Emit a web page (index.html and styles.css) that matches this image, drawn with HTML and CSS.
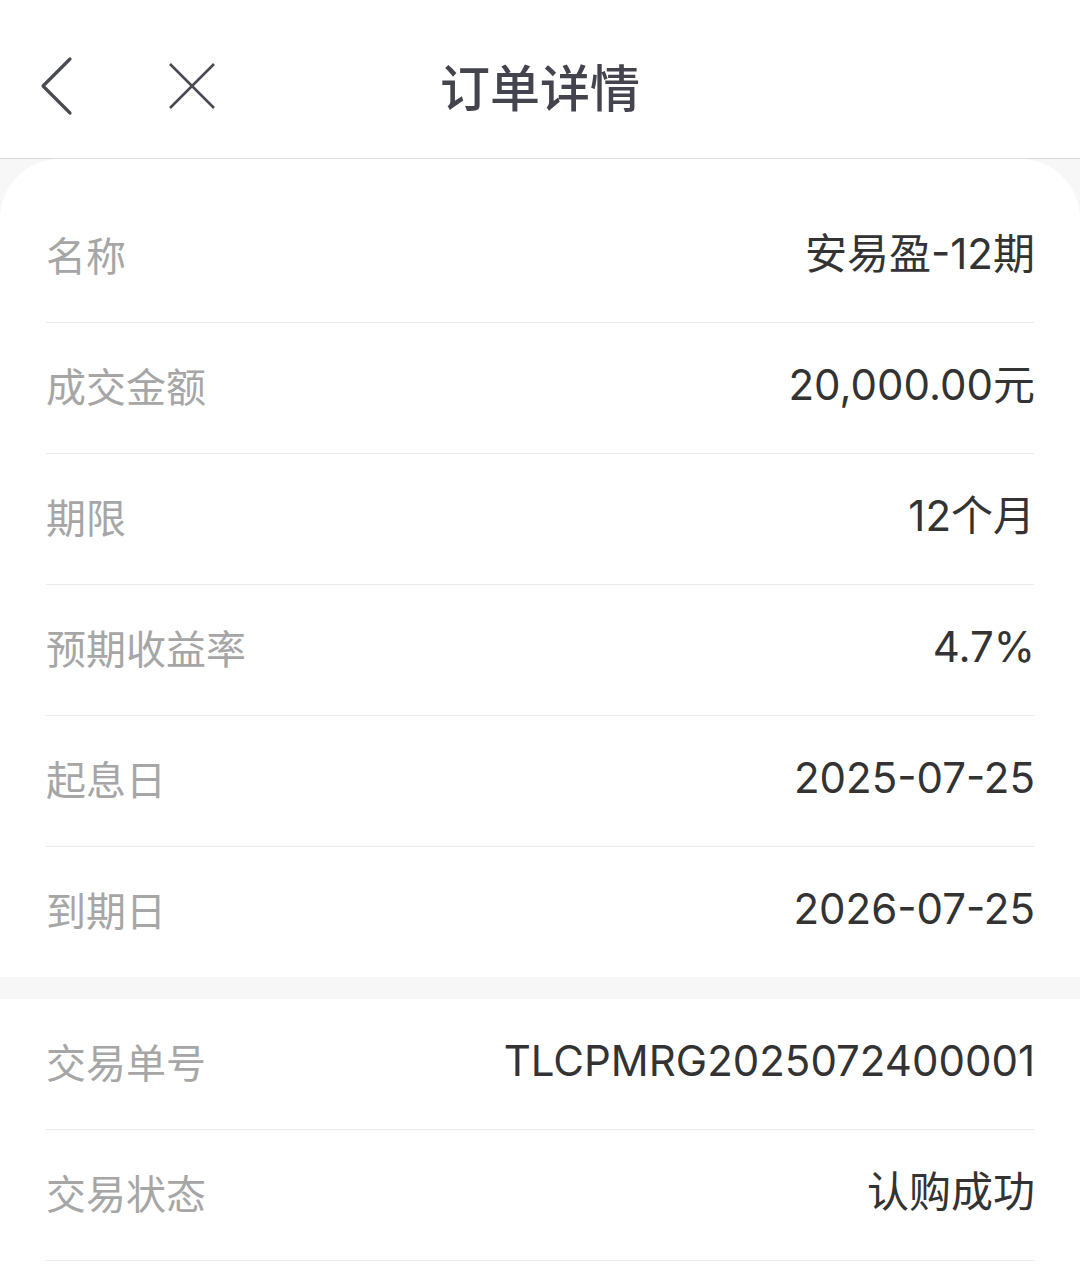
FILE: index.html
```html
<!DOCTYPE html>
<html lang="zh-CN">
<head>
<meta charset="utf-8">
<title>订单详情</title>
<link rel="stylesheet" href="styles.css">
</head>
<body>
<header class="nav">
  <div class="nav-left">
    <span class="icon back">
      <svg width="40" height="64" viewBox="0 0 40 64"><path d="M30 4 L3 31 L30 58" fill="none" stroke="#4a4a52" stroke-width="3.2" stroke-linecap="round" stroke-linejoin="round"/></svg>
    </span>
    <span class="icon close">
      <svg width="48" height="48" viewBox="0 0 48 48"><path d="M2 2 L46 46 M46 2 L2 46" fill="none" stroke="#4a4a52" stroke-width="2.6"/></svg>
    </span>
  </div>
  <h1 class="title">订单详情</h1>
</header>
<main class="page">
  <section class="card card-top">
    <div class="row"><span class="label">名称</span><span class="value">安易盈-12期</span></div>
    <div class="row"><span class="label">成交金额</span><span class="value">20,000.00元</span></div>
    <div class="row"><span class="label">期限</span><span class="value">12个月</span></div>
    <div class="row"><span class="label">预期收益率</span><span class="value">4.7%</span></div>
    <div class="row"><span class="label">起息日</span><span class="value">2025-07-25</span></div>
    <div class="row"><span class="label">到期日</span><span class="value">2026-07-25</span></div>
  </section>
  <section class="card card-bottom">
    <div class="row"><span class="label">交易单号</span><span class="value">TLCPMRG2025072400001</span></div>
    <div class="row"><span class="label">交易状态</span><span class="value">认购成功</span></div>
  </section>
</main>
</body>
</html>
```
FILE: styles.css
```css
* { box-sizing: border-box; }
html, body { margin: 0; padding: 0; }
body {
  width: 1080px;
  height: 1282px;
  overflow: hidden;
  background: #ffffff;
  font-family: "Noto Sans CJK SC", "Noto Sans", sans-serif;
}
.nav {
  height: 159px;
  border-bottom: 1px solid #dddddd;
  background: #ffffff;
  display: flex;
  align-items: center;
  justify-content: center;
  position: relative;
}
.nav-left {
  position: absolute;
  left: 40px;
  top: 55px;
  display: flex;
  align-items: center;
  gap: 88px;
}
.icon { display: flex; }
.back svg { display: block; }
.close { margin-top: -2px; }
.title {
  margin: 0;
  font-size: 50px;
  font-weight: 500;
  color: #44444e;
  line-height: 1;
  margin-top: 12px;
}
.page {
  background: #f7f7f7;
  height: 1123px;
}
.card {
  background: #ffffff;
  padding: 0 46px;
}
.card-top {
  border-radius: 60px 60px 0 0;
  padding-top: 33px;
  margin-bottom: 22px;
}
.card-bottom {
  height: 284px;
}
.row {
  height: 131px;
  display: flex;
  align-items: center;
  justify-content: space-between;
  border-bottom: 1px solid #ebebeb;
  padding-bottom: 6px;
}
.card-top .row:last-child { border-bottom: none; height: 130px; }
.label {
  font-size: 40px;
  color: #a6a6a6;
  line-height: 1;
}
.value {
  font-family: "Inter", "Noto Sans CJK SC", sans-serif;
  font-size: 42px;
  color: #333333;
  line-height: 1;
  margin-right: -1px;
}
```
